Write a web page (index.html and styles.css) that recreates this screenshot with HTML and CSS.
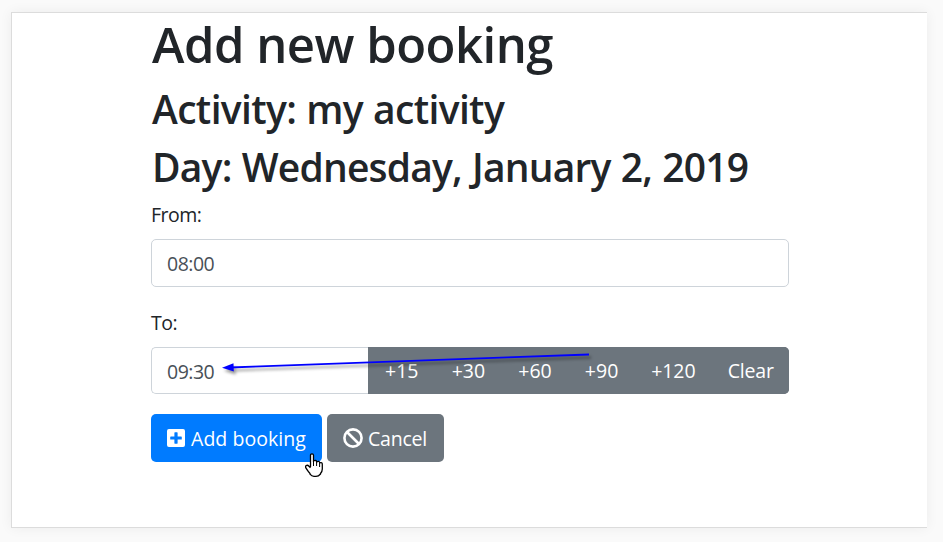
FILE: index.html
```html
<!DOCTYPE html>
<html lang="en">
<head>
<meta charset="utf-8">
<title>Add new booking</title>
<link rel="stylesheet" href="styles.css">
</head>
<body>
<main class="frame">
  <form class="container">
    <h1>Add new booking</h1>
    <h2 class="activity">Activity: my activity</h2>
    <h2 class="day">Day: Wednesday, January 2, 2019</h2>
    <div class="form-group">
      <label for="from">From:</label>
      <input class="control" id="from" type="text" value="08:00">
    </div>
    <div class="form-group">
      <label for="to">To:</label>
      <div class="input-group">
        <input class="control control-to" id="to" type="text" value="09:30">
        <div class="append">
          <button type="button" class="step">+15</button>
          <button type="button" class="step">+30</button>
          <button type="button" class="step">+60</button>
          <button type="button" class="step">+90</button>
          <button type="button" class="step step-wide">+120</button>
          <button type="button" class="step step-clear">Clear</button>
        </div>
      </div>
    </div>
    <div class="actions">
      <button type="button" class="btn primary"><svg class="icon-plus" viewBox="0 0 448 448"><path fill="currentColor" fill-rule="evenodd" d="M48 0h352a48 48 0 0 1 48 48v352a48 48 0 0 1-48 48H48a48 48 0 0 1-48-48V48A48 48 0 0 1 48 0ZM184 92v92H92a12 12 0 0 0-12 12v56a12 12 0 0 0 12 12h92v92a12 12 0 0 0 12 12h56a12 12 0 0 0 12-12v-92h92a12 12 0 0 0 12-12v-56a12 12 0 0 0-12-12h-92V92a12 12 0 0 0-12-12h-56a12 12 0 0 0-12 12Z"/></svg><span>Add booking</span></button>
      <button type="button" class="btn secondary"><svg class="icon-ban" viewBox="0 0 20 20"><g fill="none" stroke="currentColor" stroke-width="2.6"><circle cx="10" cy="10" r="8.6"/><path d="M4 4l12 12"/></g></svg><span>Cancel</span></button>
    </div>
  </form>
</main>
<svg class="arrow" width="943" height="542" viewBox="0 0 943 542"><path d="M589 354.5 230 367.5" fill="none" stroke="#00f" stroke-width="1.8"/><path d="M222 367.7 233.5 363.2 233.8 371.4Z" fill="#00f"/></svg>
<svg class="cursor" width="18" height="25" viewBox="0 0 18 25"><path d="M5.5 14V2.3Q5.5.8 7 .8t1.5 1.5V8Q11.2 6.6 11.7 8.8 14.2 7.5 14.8 9.8 17.3 9 17.3 11.5V16Q17.3 18.5 15.5 20.5V21Q13.5 23.4 11 23.4H9Q6.7 23.4 5 21.2V20.5Q2.7 18 1.2 15.4 0 13.5 1 12.7 2.5 11.6 4 13.2L5.5 14.8" fill="#fff" stroke="#000" stroke-width="1.3"/><path d="M8.5 8v5M11.6 9v4M14.6 10v4" stroke="#000" fill="none"/></svg>
</body>
</html>
```
FILE: styles.css
```css
* { box-sizing: border-box; }
body {
  margin: 0;
  padding: 12px 16px 14px 11px;
  height: 542px;
  overflow: hidden;
  background: #fafafa;
  color: #212529;
  font: 19.5px/30px "Open Sans", sans-serif;
}
.frame {
  height: 516px;
  border: 1px solid #dcdcdc;
  border-right: 0;
  background: #fff;
  box-shadow: 0 0 12px rgba(0, 0, 0, .06);
}
.container { width: 638px; margin-left: 139px; }
h1, h2 { margin: 0 0 10px; padding-left: 1px; font-weight: 600; white-space: nowrap; }
h1 { height: 60px; font-size: 49px; line-height: 62px; letter-spacing: -.5px; }
h2 { height: 48px; font-size: 39px; line-height: 51px; }
.activity { letter-spacing: -.65px; word-spacing: .5px; }
.day { letter-spacing: -.8px; word-spacing: .8px; }
.form-group { margin-bottom: 20px; }
label { display: block; height: 30px; line-height: 32px; margin-bottom: 10px; letter-spacing: -.5px; }
.control {
  display: block;
  width: 100%;
  height: 47.5px;
  padding: 8px 16px 6px 15px;
  border: 1px solid #ced4da;
  border-radius: 5px;
  background: #fff;
  color: #495057;
  font: inherit;
  letter-spacing: -.5px;
}
.input-group { display: flex; height: 47.5px; }
.control-to { width: 217px; border-right: 0; border-radius: 5px 0 0 5px; }
.append { display: flex; flex: 1; overflow: hidden; border-radius: 0 5px 5px 0; background: #6c757d; }
button { border: 0; margin: 0; padding: 0; color: #fff; font: inherit; white-space: nowrap; }
.step { width: 66.6px; padding: 2px 0 0 1px; background: #6c757d; }
.step-wide { width: 77px; letter-spacing: -.1px; }
.step-clear { flex: 1; letter-spacing: -.2px; }
.actions { display: flex; gap: 5px; }
.btn { display: flex; align-items: center; height: 47.5px; padding: 0 16px; border-radius: 5px; }
.btn span { padding-top: 2px; }
.primary { width: 171px; background: #007bff; }
.primary span { letter-spacing: .05px; }
.secondary { width: 117px; background: #6c757d; }
.secondary span { letter-spacing: -.2px; }
.icon-plus { width: 18px; height: 18px; margin-right: 6px; flex: none; }
.icon-ban { width: 20px; height: 20px; margin-right: 5px; flex: none; }
.arrow { position: absolute; left: 0; top: 0; pointer-events: none; filter: drop-shadow(2px 3px 1.5px rgba(0, 0, 0, .4)); }
.cursor { position: absolute; left: 305px; top: 453px; pointer-events: none; }
```
